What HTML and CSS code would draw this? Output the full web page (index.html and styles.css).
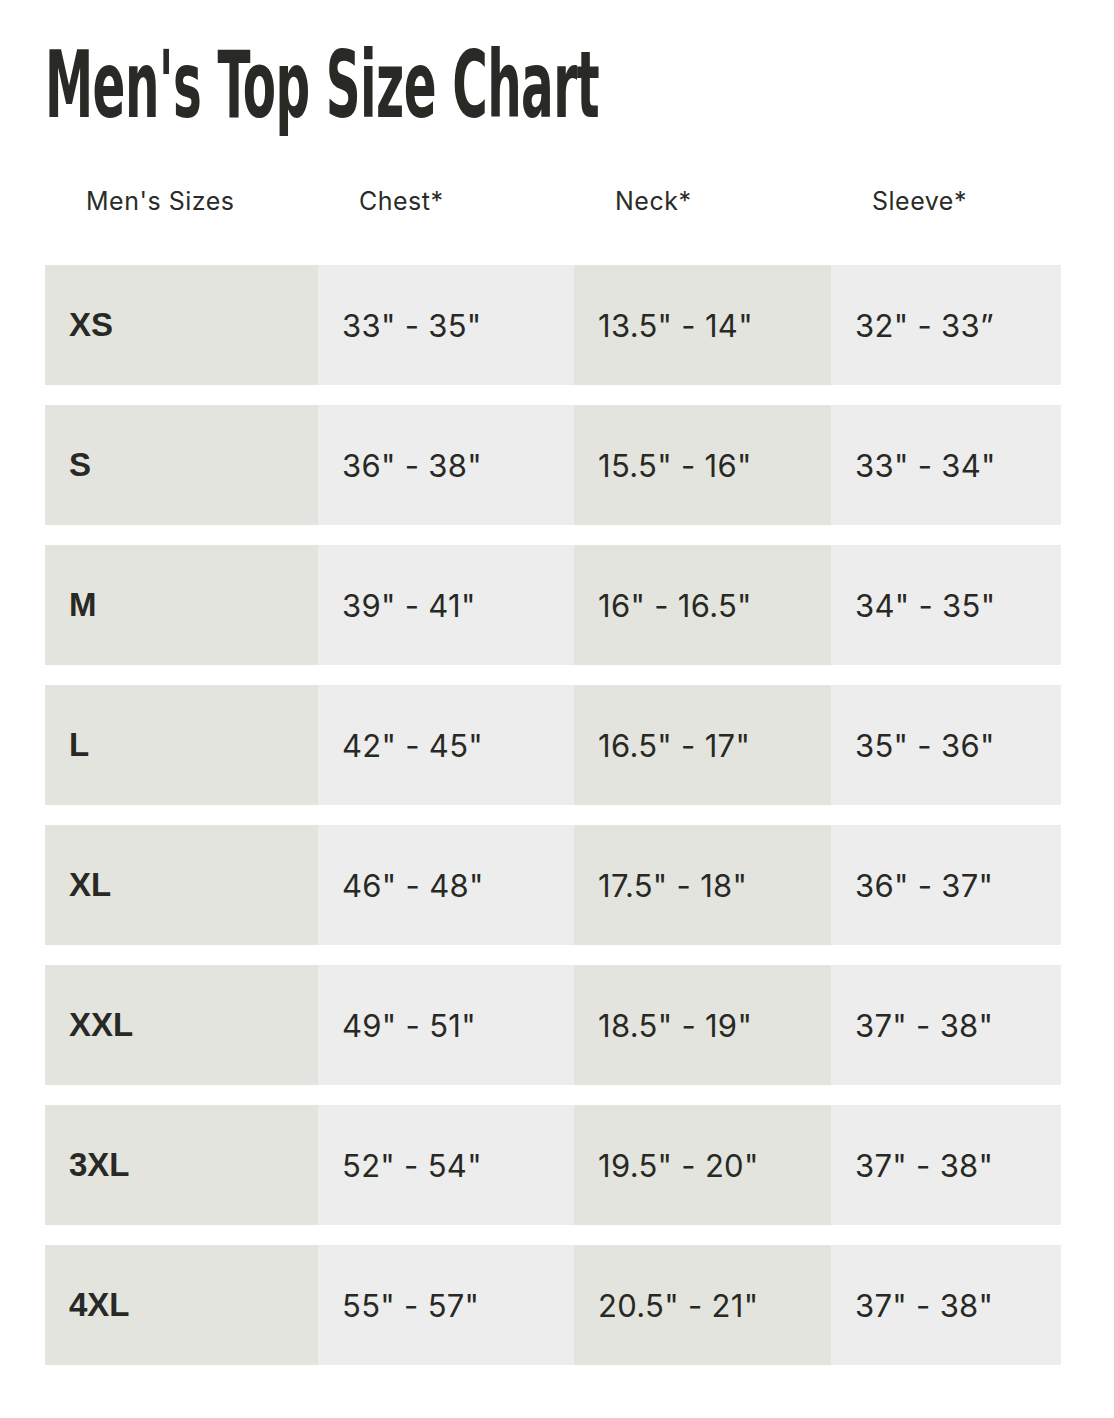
FILE: index.html
```html
<!DOCTYPE html>
<html lang="en">
<head>
<meta charset="utf-8">
<title>Men's Top Size Chart</title>
<link rel="stylesheet" href="styles.css">
</head>
<body>
<main class="page">
  <h1 class="title"><span class="title-text">Men's Top Size Chart</span></h1>
  <div class="chart">
    <div class="head-row">
      <div class="head">Men's Sizes</div>
      <div class="head">Chest*</div>
      <div class="head">Neck*</div>
      <div class="head">Sleeve*</div>
    </div>
    <div class="row"><div class="cell size">XS</div><div class="cell">33" - 35"</div><div class="cell">13.5" - 14"</div><div class="cell">32" - 33”</div></div>
    <div class="row"><div class="cell size">S</div><div class="cell">36" - 38"</div><div class="cell">15.5" - 16"</div><div class="cell">33" - 34"</div></div>
    <div class="row"><div class="cell size">M</div><div class="cell">39" - 41"</div><div class="cell">16" - 16.5"</div><div class="cell">34" - 35"</div></div>
    <div class="row"><div class="cell size">L</div><div class="cell">42" - 45"</div><div class="cell">16.5" - 17"</div><div class="cell">35" - 36"</div></div>
    <div class="row"><div class="cell size">XL</div><div class="cell">46" - 48"</div><div class="cell">17.5" - 18"</div><div class="cell">36" - 37"</div></div>
    <div class="row"><div class="cell size">XXL</div><div class="cell">49" - 51"</div><div class="cell">18.5" - 19"</div><div class="cell">37" - 38"</div></div>
    <div class="row"><div class="cell size">3XL</div><div class="cell">52" - 54"</div><div class="cell">19.5" - 20"</div><div class="cell">37" - 38"</div></div>
    <div class="row"><div class="cell size">4XL</div><div class="cell">55" - 57"</div><div class="cell">20.5" - 21"</div><div class="cell">37" - 38"</div></div>
  </div>
</main>
</body>
</html>
```

FILE: styles.css
```css
html, body {
  margin: 0;
  padding: 0;
  background: #ffffff;
}

.page {
  padding: 40px 53px 0 45px;
  color: #282924;
  font-family: Inter, Roboto, "Liberation Sans", sans-serif;
}

.title {
  margin: 0;
  height: 92px;
  font-family: "DejaVu Sans", sans-serif;
  font-stretch: condensed;
  font-weight: 700;
  font-size: 92px;
  line-height: 92px;
  white-space: nowrap;
  color: #292a25;
}

.title-text {
  display: inline-block;
  transform: scaleX(0.585);
  transform-origin: 0 50%;
  letter-spacing: -1px;
}

.chart {
  display: flex;
  flex-direction: column;
  gap: 20px;
}

.head-row,
.row {
  display: grid;
  grid-template-columns: 273px 256px 257px 230px;
}

.head-row {
  margin-top: 54px;
  margin-bottom: 29px;
  height: 30px;
}

.head {
  padding-left: 41px;
  font-size: 25px;
  line-height: 30px;
  letter-spacing: 0.5px;
  color: #2b2c28;
}

.row {
  height: 120px;
}

.cell {
  display: flex;
  align-items: center;
  padding-left: 24px;
  font-size: 31px;
  letter-spacing: 0.3px;
  background: #ededed;
}

.cell:nth-child(odd) {
  background: #e3e4dd;
}

.cell.size {
  font-family: "Liberation Sans", Arial, sans-serif;
  font-weight: 700;
  font-size: 33px;
  letter-spacing: 0;
}
```
